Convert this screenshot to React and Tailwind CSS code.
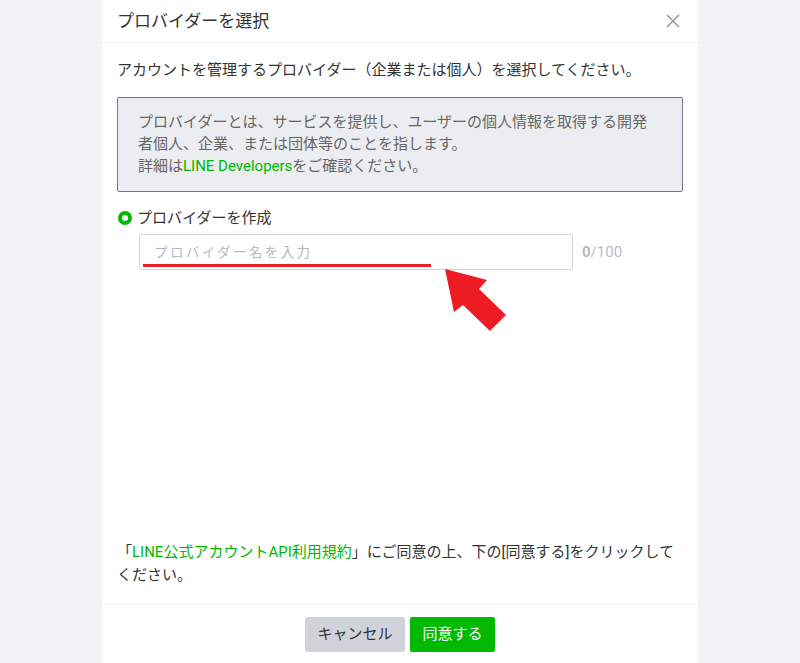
import React from 'react';

const font = { fontFamily: 'Roboto, "Noto Sans CJK JP", sans-serif' };

function CloseIcon() {
  return (
    <svg width="14" height="14" viewBox="0 0 14 14" className="text-[#9a9a9a]">
      <path d="M1 1 L13 13 M13 1 L1 13" stroke="currentColor" strokeWidth="1.6" fill="none" />
    </svg>
  );
}

export default function App() {
  return (
    <div className="w-full h-[663px] bg-[#f2f3f5] flex justify-center text-[#333]" style={font}>
      <div className="w-[596px] h-full bg-white flex flex-col">
        {/* header */}
        <div className="h-[43px] border-b border-[#eceef1] flex items-center justify-between pl-[15px] pr-[18px]">
          <h2 className="text-[17px] leading-none font-normal text-[#333]">プロバイダーを選択</h2>
          <CloseIcon />
        </div>

        {/* body */}
        <div className="flex-1 flex flex-col px-[15px] pt-[16px] pb-[17px]">
          <p className="text-[15px] leading-[22px]">
            アカウントを管理するプロバイダー（企業または個人）を選択してください。
          </p>

          <div className="mt-[16px] bg-[#ebedf0] border border-[#6f7689] rounded-[2px] pl-[20px] pr-[10px] pt-[13px] pb-[14px] text-[15px] leading-[22px] text-[#666]">
            <p className="whitespace-nowrap">
              プロバイダーとは、サービスを提供し、ユーザーの個人情報を取得する開発
              <br />
              者個人、企業、または団体等のことを指します。
              <br />
              詳細は<span className="text-[#00b900]">LINE Developers</span>をご確認ください。
            </p>
          </div>

          <label className="mt-[15px] flex items-center gap-[5px] h-[22px]">
            <span className="w-[14px] h-[14px] rounded-full bg-[#00b900] flex items-center justify-center ml-[1px]">
              <span className="w-[6px] h-[6px] rounded-full bg-white" />
            </span>
            <span className="text-[15px]">プロバイダーを作成</span>
          </label>

          <div className="mt-[5px] ml-[22px] flex items-center gap-[9px]">
            <div className="relative">
              <input
                className="w-[434px] h-[36px] border border-[#d4d7dc] rounded-[2px] px-[14px] text-[13.5px] tracking-[2.4px] placeholder:text-[#b5b9c0] outline-none"
                placeholder="プロバイダー名を入力"
              />
              <div className="absolute left-[4px] top-[30px] w-[288px] h-[3px] bg-[#e8202a]" />
              <svg className="absolute left-[300px] top-[30px]" width="80" height="80" viewBox="0 0 80 80">
                <polygon
                  points="6,5 48,16 40,25 67,51 51,67 24,41 15,48"
                  fill="#ed1c24"
                />
              </svg>
            </div>
            <span className="text-[15px] text-[#b7bcc4]">
              <b className="font-bold">0</b>/100
            </span>
          </div>

          <div className="flex-1" />

          <p className="text-[15px] leading-[23px] whitespace-nowrap">
            「<span className="text-[#00b900]">LINE公式アカウントAPI利用規約</span>」にご同意の上、下の[同意する]をクリックして
            <br />
            ください。
          </p>
        </div>

        {/* footer */}
        <div className="h-[59px] border-t border-[#eceef1] flex justify-center gap-[5px] pt-[12px]">
          <button className="w-[100px] h-[35px] bg-[#d0d4da] rounded-[2px] text-[15px] text-[#333]">
            キャンセル
          </button>
          <button className="w-[85px] h-[35px] bg-[#00b900] rounded-[2px] text-[15px] text-white">
            同意する
          </button>
        </div>
      </div>
    </div>
  );
}
